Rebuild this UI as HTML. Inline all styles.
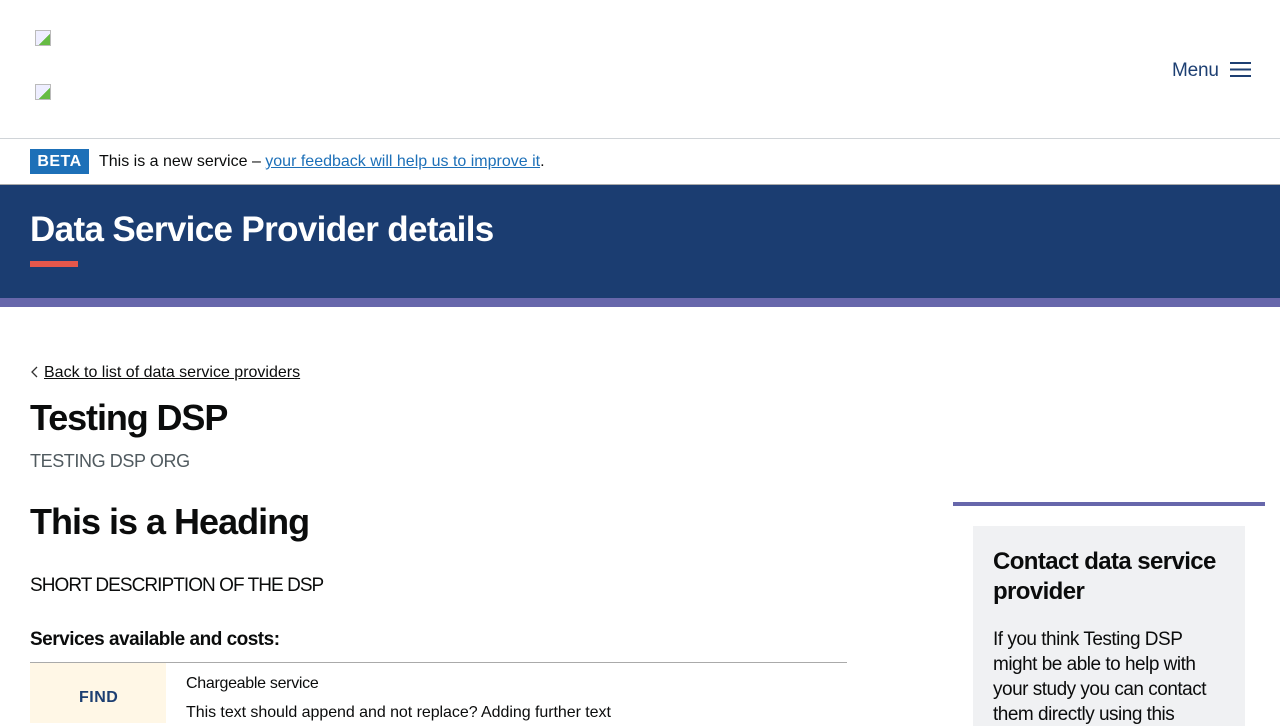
<!DOCTYPE html>
<html><head><meta charset="utf-8"><style>
*{margin:0;padding:0;box-sizing:border-box}
body{width:1280px;height:720px;overflow:hidden;font-family:"Liberation Sans",Arial,sans-serif;color:#0b0c0c;background:#fff;position:relative}
.abs{position:absolute;white-space:nowrap}
.img{position:absolute;width:16px;height:16px;border:1px solid #bbb;background:linear-gradient(135deg,#eef 60%,#6b4 60%)}
</style></head><body>
<div class="img" style="left:35px;top:30px"></div>
<div class="img" style="left:35px;top:84px"></div>
<div class="abs" style="left:1172px;top:60px;font-size:19px;color:#1d3f72;letter-spacing:-0.2px">Menu</div>
<svg class="abs" style="left:1230px;top:61px" width="21" height="17"><g stroke="#1d3f72" stroke-width="2"><line x1="0" y1="2" x2="21" y2="2"/><line x1="0" y1="8.5" x2="21" y2="8.5"/><line x1="0" y1="15" x2="21" y2="15"/></g></svg>
<div class="abs" style="left:0;top:138px;width:1280px;height:1px;background:#d0d4d8"></div>
<div class="abs" style="left:30px;top:149px;width:59px;height:25px;background:#1d70b8;color:#fff;font-weight:bold;font-size:16px;line-height:25px;text-align:center;letter-spacing:0.5px">BETA</div>
<div class="abs" style="left:99px;top:153px;font-size:16px;letter-spacing:0px">This is a new service – <span style="color:#1d70b8;text-decoration:underline">your feedback will help us to improve it</span>.</div>
<div class="abs" style="left:0;top:184px;width:1280px;height:114px;background:#1b3d71;border-top:1px solid #aaa"></div>
<div class="abs" style="left:30px;top:210px;font-size:35px;font-weight:bold;color:#fff;letter-spacing:-0.65px">Data Service Provider details</div>
<div class="abs" style="left:30px;top:261px;width:48px;height:6px;background:#e5574b"></div>
<div class="abs" style="left:0;top:298px;width:1280px;height:9px;background:#6767ab"></div>
<svg class="abs" style="left:30px;top:365px" width="9" height="14"><path d="M7 2 L2 7 L7 12" stroke="#333" fill="none" stroke-width="1.3"/></svg>
<div class="abs" style="left:44px;top:364px;font-size:16px;text-decoration:underline;letter-spacing:0px">Back to list of data service providers</div>
<div class="abs" style="left:30px;top:397px;font-size:36px;font-weight:bold;letter-spacing:-1.1px">Testing DSP</div>
<div class="abs" style="left:30px;top:451px;font-size:18px;color:#505a5f;letter-spacing:-0.4px">TESTING DSP ORG</div>
<div class="abs" style="left:30px;top:501px;font-size:36px;font-weight:bold;letter-spacing:-1px">This is a Heading</div>
<div class="abs" style="left:30px;top:575px;font-size:19px;letter-spacing:-0.95px">SHORT DESCRIPTION OF THE DSP</div>
<div class="abs" style="left:30px;top:629px;font-size:19px;font-weight:bold;letter-spacing:-0.5px">Services available and costs:</div>
<div class="abs" style="left:30px;top:662px;width:817px;height:1px;background:#aaa"></div>
<div class="abs" style="left:30px;top:663px;width:136px;height:60px;background:#fff7e6"></div>
<div class="abs" style="left:79px;top:689px;font-size:16px;font-weight:bold;color:#1d3f72;letter-spacing:0.5px">FIND</div>
<div class="abs" style="left:186px;top:675px;font-size:16px;letter-spacing:-0.3px">Chargeable service</div>
<div class="abs" style="left:186px;top:704px;font-size:16px;letter-spacing:-0.05px">This text should append and not replace? Adding further text</div>
<div class="abs" style="left:953px;top:502px;width:312px;height:4px;background:#6767ab"></div>
<div class="abs" style="left:973px;top:526px;width:272px;height:200px;background:#f0f1f3"></div>
<div class="abs" style="left:993px;top:547px;font-size:24px;font-weight:bold;line-height:30px;letter-spacing:-0.6px">Contact data service<br>provider</div>
<div class="abs" style="left:993px;top:627px;font-size:19px;line-height:25px;letter-spacing:-0.5px">If you think Testing DSP<br>might be able to help with<br>your study you can contact<br>them directly using this</div>
</body></html>
